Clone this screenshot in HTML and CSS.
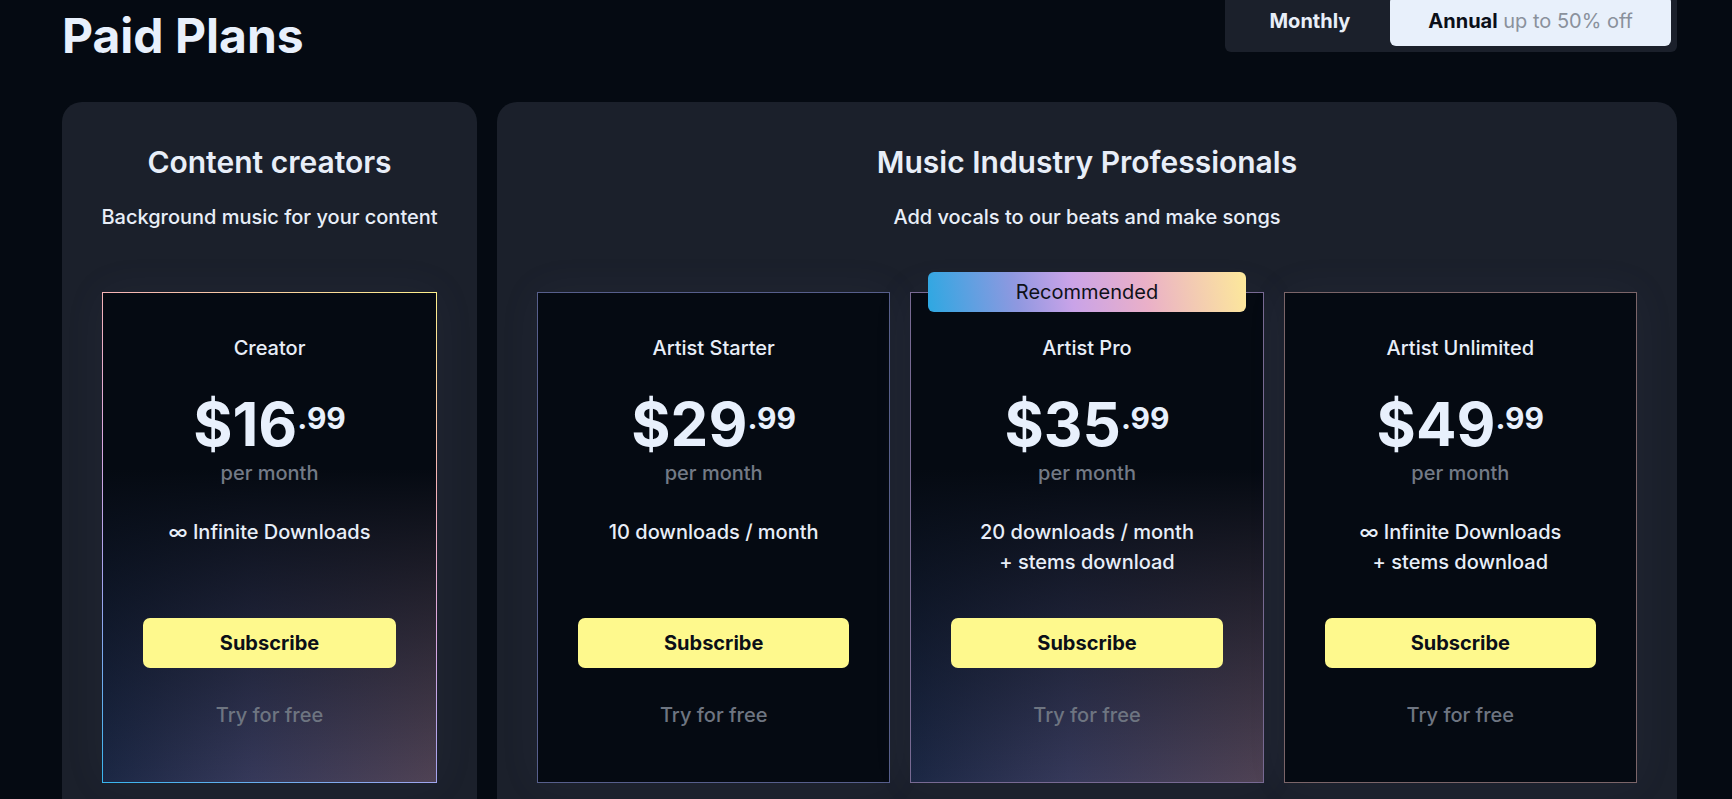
FILE: index.html
```html
<!DOCTYPE html>
<html lang="en">
<head>
<meta charset="utf-8">
<title>Paid Plans</title>
<link rel="stylesheet" href="styles.css">
</head>
<body>
<main class="page">
  <header class="top">
    <h1 class="page-title">Paid Plans</h1>
    <div class="toggle">
      <button class="tog">Monthly</button>
      <button class="tog tog-active"><b>Annual</b> <span class="tog-note">up to 50% off</span></button>
    </div>
  </header>

  <div class="panels">
    <section class="panel panel-creators">
      <h2 class="panel-title">Content creators</h2>
      <p class="panel-sub">Background music for your content</p>
      <div class="cards cards-one">
        <article class="card card-creator">
          <h3 class="card-name">Creator</h3>
          <div class="price"><span class="amount">$16</span><span class="cents">.99</span></div>
          <div class="per">per month</div>
          <div class="features"><div>∞ Infinite Downloads</div></div>
          <button class="subscribe">Subscribe</button>
          <a class="try" href="#">Try for free</a>
        </article>
      </div>
    </section>

    <section class="panel panel-pros">
      <h2 class="panel-title">Music Industry Professionals</h2>
      <p class="panel-sub">Add vocals to our beats and make songs</p>
      <div class="cards cards-three">
        <article class="card card-starter">
          <h3 class="card-name">Artist Starter</h3>
          <div class="price"><span class="amount">$29</span><span class="cents">.99</span></div>
          <div class="per">per month</div>
          <div class="features"><div>10 downloads / month</div></div>
          <button class="subscribe">Subscribe</button>
          <a class="try" href="#">Try for free</a>
        </article>
        <article class="card card-pro">
          <div class="badge">Recommended</div>
          <h3 class="card-name">Artist Pro</h3>
          <div class="price"><span class="amount">$35</span><span class="cents">.99</span></div>
          <div class="per">per month</div>
          <div class="features"><div>20 downloads / month</div><div>+ stems download</div></div>
          <button class="subscribe">Subscribe</button>
          <a class="try" href="#">Try for free</a>
        </article>
        <article class="card card-unlimited">
          <h3 class="card-name">Artist Unlimited</h3>
          <div class="price"><span class="amount">$49</span><span class="cents">.99</span></div>
          <div class="per">per month</div>
          <div class="features"><div>∞ Infinite Downloads</div><div>+ stems download</div></div>
          <button class="subscribe">Subscribe</button>
          <a class="try" href="#">Try for free</a>
        </article>
      </div>
    </section>
  </div>
</main>
</body>
</html>
```

FILE: styles.css
```css
* { box-sizing: border-box; }

html, body {
  margin: 0;
  padding: 0;
  background: #050a12;
  overflow: hidden;
}

body {
  font-family: "Inter", "Noto Sans", "Liberation Sans", sans-serif;
  color: #e8eef8;
}

.page {
  padding: 12px 55px 0 62px;
}

.top {
  display: flex;
  justify-content: space-between;
  align-items: flex-start;
}

.page-title {
  margin: 0;
  font-size: 48px;
  line-height: 48px;
  font-weight: 700;
  color: #e8f0fc;
}

.toggle {
  margin-top: -22px;
  display: flex;
  padding: 6px 6px 6px 5px;
  background: #1b202b;
  border-radius: 6px;
}

.tog {
  height: 50px;
  padding: 0 38px;
  border: 0;
  background: transparent;
  font-family: inherit;
  font-size: 20px;
  font-weight: 700;
  color: #e8eef8;
  border-radius: 6px;
}

.tog:first-child { padding: 0 40px 0 39px; }

.tog-active {
  background: #e8f0fb;
  color: #0b0f18;
  font-weight: 400;
}

.tog-active b { font-weight: 700; }

.tog-note { color: #8a919c; }

.panels {
  margin-top: 42px;
  display: flex;
  gap: 20px;
}

.panel {
  background: #1b202b;
  border-radius: 20px;
  padding: 42px 40px 40px;
  text-align: center;
}

.panel-creators { width: 415px; flex: none; }
.panel-pros { flex: 1; }

.panel-title {
  margin: 0;
  font-size: 30px;
  line-height: 36px;
  font-weight: 600;
  color: #e8eef8;
}

.panel-sub {
  margin: 22px -20px 0;
  white-space: nowrap;
  font-size: 20px;
  line-height: 30px;
  font-weight: 500;
  color: #e8eef8;
}

.cards {
  margin-top: 60px;
  display: grid;
  gap: 20px;
}

.cards-one { grid-template-columns: 1fr; }
.cards-three { grid-template-columns: repeat(3, 1fr); }

.card {
  position: relative;
  display: flex;
  flex-direction: column;
  align-items: stretch;
  padding: 40px 40px 42px;
  border: 1px solid #5a628e;
  background: #050a12;
  box-shadow: 0 0 40px rgba(110, 120, 170, 0.07);
}

.card-starter { border-color: #575f8c; }
.card-unlimited { border-color: #7b6569; }

.card-pro {
  border-color: #786a93;
  background:
    linear-gradient(to bottom, rgba(5, 10, 18, 1) 36%, rgba(5, 10, 18, 0) 100%),
    linear-gradient(to right, #1b2744 0%, #36395a 45%, #4f4254 100%);
}

.card-creator {
  border: 1px solid transparent;
  background:
    linear-gradient(to bottom, rgba(5, 10, 18, 1) 36%, rgba(5, 10, 18, 0) 100%) padding-box,
    linear-gradient(to right, #1b2744 0%, #36395a 45%, #4f4254 100%) padding-box,
    linear-gradient(30deg, #38b6ee 0%, #a7a4ee 30%, #dca8e0 50%, #f6b3b6 72%, #fef08a 100%) border-box;
}

.badge {
  position: absolute;
  top: -21px;
  left: 17px;
  right: 17px;
  height: 40px;
  border-radius: 6px;
  background: linear-gradient(80deg, #2da8e2 0%, #8f98e0 28%, #c9a3e8 45%, #eab0c8 68%, #fde99a 100%);
  color: #0e1118;
  font-size: 20px;
  line-height: 40px;
  font-weight: 400;
}

.card-name {
  margin: 0;
  font-size: 20px;
  line-height: 30px;
  font-weight: 500;
  color: #e8eef8;
}

.price {
  margin-top: 31px;
  display: flex;
  justify-content: center;
  align-items: flex-start;
  color: #e8f0fc;
  font-weight: 700;
}

.amount {
  font-size: 60px;
  line-height: 60px;
}

.cents {
  margin-top: 9px;
  font-size: 30px;
  line-height: 30px;
}

.per {
  margin-top: 4px;
  font-size: 20px;
  line-height: 30px;
  font-weight: 500;
  color: #737a86;
}

.features {
  margin-top: 29px;
  min-height: 60px;
  font-size: 20px;
  line-height: 30px;
  font-weight: 500;
  color: #e8eef8;
}

.subscribe {
  margin-top: 41px;
  height: 50px;
  border: 0;
  border-radius: 7px;
  background: #fef98d;
  color: #0b0f18;
  font-family: inherit;
  font-size: 20px;
  font-weight: 700;
}

.try {
  margin-top: 22px;
  height: 50px;
  line-height: 50px;
  font-size: 20px;
  font-weight: 500;
  color: #6e7581;
  text-decoration: none;
}
```
